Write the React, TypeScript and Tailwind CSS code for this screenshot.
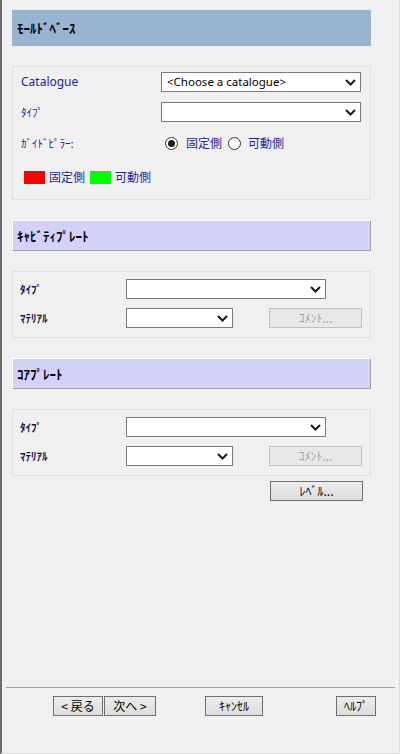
const jp = { fontFamily: '"Noto Sans CJK JP", "Noto Sans", sans-serif' };
const ui = { fontFamily: '"Noto Sans", "Noto Sans CJK JP", sans-serif' };

function Chevron() {
  return (
    <svg width="11" height="7" viewBox="0 0 11 7" className="shrink-0">
      <path d="M1 1 L5.5 5.5 L10 1" fill="none" stroke="#1a1a1a" strokeWidth="2" />
    </svg>
  );
}

function Select({ width, text }: { width: string; text?: string }) {
  return (
    <div className={`${width} h-5 bg-white border border-[#7a7a7a] flex items-center justify-between pl-[5px] pr-[4px]`}>
      <span className="text-[11.5px] text-black leading-none" style={ui}>
        {text}
      </span>
      <Chevron />
    </div>
  );
}

function Radio({ checked }: { checked?: boolean }) {
  return (
    <div className="w-[13px] h-[13px] rounded-full border border-[#333333] bg-white flex items-center justify-center">
      {checked && <div className="w-[7px] h-[7px] rounded-full bg-[#1a1a1a]" />}
    </div>
  );
}

function WinButton({ label, className, disabled }: { label: string; className: string; disabled?: boolean }) {
  return (
    <div
      className={`${className} h-5 flex items-center justify-center text-[12px] leading-none border ${
        disabled ? 'border-[#bfbfbf] bg-[#e8e8e8] text-[#a0a0a0]' : 'border-[#707070] bg-gradient-to-b from-[#ececec] to-[#dcdcdc] text-black'
      }`}
      style={jp}
    >
      {label}
    </div>
  );
}

function PlateHeader({ title }: { title: string }) {
  return (
    <div className="h-[31px] bg-[#d2d2f8] border-t border-l border-t-white border-l-white border-b border-r border-b-[#a0a0a0] border-r-[#a0a0a0] flex items-center pl-[4px]">
      <span className="text-[13px] font-bold text-black" style={jp}>
        {title}
      </span>
    </div>
  );
}

function PlateGroup() {
  return (
    <div className="border border-[#e0e0e0] pt-[7px] pb-[9px] pl-[7px] flex flex-col gap-[9px]">
      <div className="flex items-center h-5">
        <span className="w-[106px] text-[11px] font-bold text-[#14144e]" style={jp}>
          ﾀｲﾌﾟ
        </span>
        <Select width="w-[200px]" />
      </div>
      <div className="flex items-center h-5">
        <span className="w-[106px] text-[11px] font-bold text-[#14144e]" style={jp}>
          ﾏﾃﾘｱﾙ
        </span>
        <Select width="w-[107px]" />
        <WinButton label="ｺﾒﾝﾄ..." className="w-[93px] ml-[36px]" disabled />
      </div>
    </div>
  );
}

export default function App() {
  return (
    <div className="w-[400px] h-[754px] bg-[#f0f0f0] border-l-2 border-l-[#6e6e6e] border-r border-r-[#dcdcdc] border-b border-b-[#dcdcdc] flex flex-col">
      <div className="pl-[10px] pt-[10px] w-[369px] flex flex-col">
        {/* Mold base */}
        <div className="h-9 bg-[#99b4d1] flex items-center pl-[5px]">
          <span className="text-[13px] font-bold text-black" style={jp}>
            ﾓｰﾙﾄﾞﾍﾞｰｽ
          </span>
        </div>

        <div className="mt-5 h-[134px] border border-[#e0e0e0] pt-[5px] pl-[8px] flex flex-col">
          <div className="flex items-center h-5">
            <span className="w-[140px] text-[12px] text-[#1e1e96]" style={ui}>
              Catalogue
            </span>
            <Select width="w-[200px]" text="<Choose a catalogue>" />
          </div>
          <div className="flex items-center h-5 mt-[10px]">
            <span className="w-[140px] text-[11px] text-[#1e1e96]" style={jp}>
              ﾀｲﾌﾟ
            </span>
            <Select width="w-[200px]" />
          </div>
          <div className="flex items-center h-[14px] mt-[14px]">
            <span className="w-[144px] text-[11px] text-[#1e1e96]" style={jp}>
              ｶﾞｲﾄﾞﾋﾟﾗｰ:
            </span>
            <Radio checked />
            <span className="ml-[8px] text-[12px] text-[#1e1e96]" style={jp}>
              固定側
            </span>
            <div className="ml-[6px]">
              <Radio />
            </div>
            <span className="ml-[7px] text-[12px] text-[#1e1e96]" style={jp}>
              可動側
            </span>
          </div>
          <div className="flex items-center h-[14px] mt-[20px] pl-[3px]">
            <div className="w-[21px] h-[13px] bg-[#ff0000]" />
            <span className="ml-[4px] text-[12px] text-[#1e1e96]" style={jp}>
              固定側
            </span>
            <div className="ml-[5px] w-[21px] h-[13px] bg-[#00ff00]" />
            <span className="ml-[4px] text-[12px] text-[#1e1e96]" style={jp}>
              可動側
            </span>
          </div>
        </div>

        {/* Cavity plate */}
        <div className="mt-5">
          <PlateHeader title="ｷｬﾋﾞﾃｨﾌﾟﾚｰﾄ" />
        </div>
        <div className="mt-5">
          <PlateGroup />
        </div>

        {/* Core plate */}
        <div className="mt-5">
          <PlateHeader title="ｺｱﾌﾟﾚｰﾄ" />
        </div>
        <div className="mt-5">
          <PlateGroup />
        </div>

        <div className="flex justify-end mt-[5px]">
          <WinButton label="ﾚﾍﾞﾙ..." className="w-[93px] mr-[8px]" />
        </div>
      </div>

      <div className="flex-1" />

      {/* Footer */}
      <div className="mx-[4px] h-px bg-[#a0a0a0]" />
      <div className="h-[65px] pt-[8px] flex items-start">
        <WinButton label="< 戻る" className="w-[50px] ml-[51px]" />
        <WinButton label="次へ >" className="w-[52px] ml-px" />
        <WinButton label="ｷｬﾝｾﾙ" className="w-[58px] ml-[49px]" />
        <WinButton label="ﾍﾙﾌﾟ" className="w-[40px] ml-[73px]" />
      </div>
    </div>
  );
}
